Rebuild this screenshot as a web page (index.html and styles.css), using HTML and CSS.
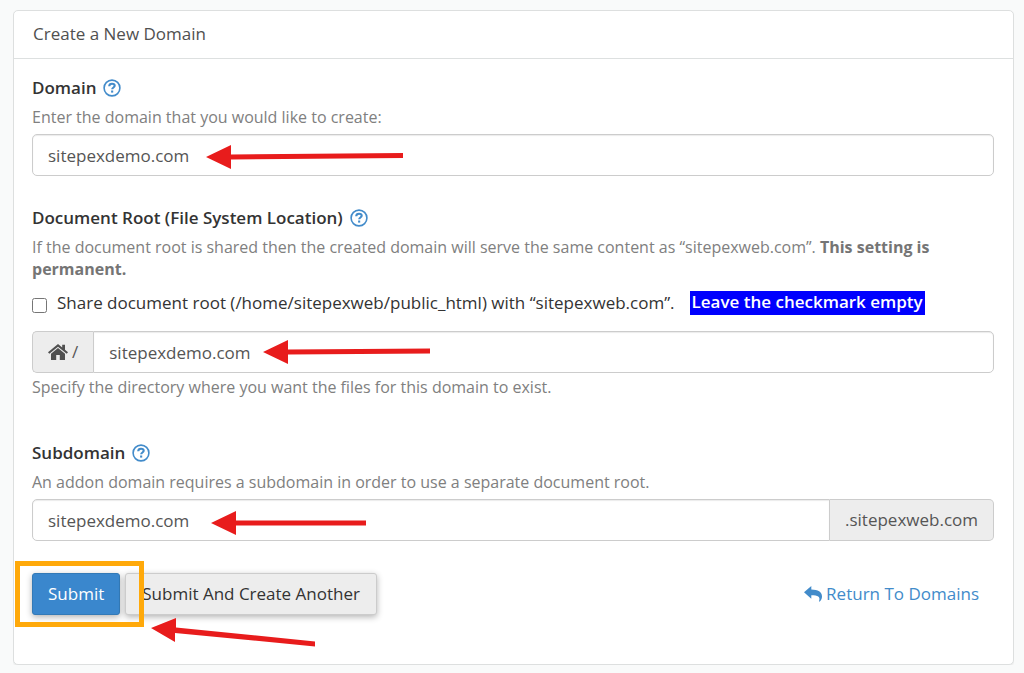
FILE: index.html
```
<!DOCTYPE html>
<html lang="en">
<head>
  <meta charset="UTF-8" />
  <meta name="viewport" content="width=device-width, initial-scale=1" />
  <title>Create a New Domain</title>
  <link rel="stylesheet" href="styles.css">
</head>
<body>

  <svg class="defs" width="0" height="0" aria-hidden="true">
    <symbol id="icon-help" viewBox="0 0 18 18">
      <circle cx="9" cy="9" r="7.9" fill="none" stroke="currentColor" stroke-width="1.6" />
      <path d="M6.2 7.2C6.300 5.500 7.500 4.700 9 4.700c1.600 0 2.700.8 2.700 2.100 0 1.700-2.500 1.700-2.500 3.500" fill="none" stroke="currentColor" stroke-width="2.1" />
      <rect x="8.1" y="11.5" width="2.1" height="2.1" fill="currentColor" />
    </symbol>
  </svg>

  <main class="panel">
    <h1 class="panel-title">Create a New Domain</h1>

    <form class="panel-body">
      <section class="field">
        <div class="field-label">
          <label for="domain">Domain</label>
          <a href="#" class="help" aria-label="Domain help"><svg><use href="#icon-help" /></svg></a>
        </div>
        <p class="hint">Enter the domain that you would like to create:</p>
        <div class="group">
          <input type="text" id="domain" value="sitepexdemo.com" />
          <svg class="arrow arrow-domain" viewBox="0 0 198 26" aria-hidden="true">
            <path d="M0 13 25 1V10.500L197 9V14L25 15.500V25Z" />
          </svg>
        </div>
      </section>

      <section class="field root">
        <div class="field-label">
          <label for="docroot">Document Root (File System Location)</label>
          <a href="#" class="help" aria-label="Document root help"><svg><use href="#icon-help" /></svg></a>
        </div>
        <p class="hint">If the document root is shared then the created domain will serve the same content as “sitepexweb.com”. <strong>This setting is permanent.</strong></p>
        <div class="share">
          <input type="checkbox" id="share" />
          <label for="share">Share document root (/home/sitepexweb/public_html) with “sitepexweb.com”.</label>
          <span class="note">Leave the checkmark empty</span>
        </div>
        <div class="group">
          <span class="addon addon-left">
            <svg class="home" viewBox="0 0 20 16" aria-hidden="true">
              <path d="M10 0 0 8.300 1.300 9.800 10 2.700 18.700 9.800 20 8.300 17 5.800V.8H14.200V3.500Z" />
              <path d="M10 4.100 3 9.800V16H8.200V11H11.800V16H17V9.800Z" />
            </svg>
            /
          </span>
          <input type="text" id="docroot" value="sitepexdemo.com" />
          <svg class="arrow arrow-root" viewBox="0 0 168 26" aria-hidden="true">
            <path d="M0 13 25 1V10.500L167 9.500V14.500L25 15.500V25Z" />
          </svg>
        </div>
        <p class="hint">Specify the directory where you want the files for this domain to exist.</p>
      </section>

      <section class="field">
        <div class="field-label">
          <label for="subdomain">Subdomain</label>
          <a href="#" class="help" aria-label="Subdomain help"><svg><use href="#icon-help" /></svg></a>
        </div>
        <p class="hint">An addon domain requires a subdomain in order to use a separate document root.</p>
        <div class="group">
          <input type="text" id="subdomain" value="sitepexdemo.com" />
          <span class="addon addon-right">.sitepexweb.com</span>
          <svg class="arrow arrow-sub" viewBox="0 0 156 26" aria-hidden="true">
            <path d="M0 13 25 1V10.500H155V15.500H25V25Z" />
          </svg>
        </div>
      </section>

      <div class="actions">
        <button type="submit" class="btn btn-primary">Submit</button>
        <button type="button" class="btn">Submit And Create Another</button>
        <a href="#" class="back">
          <svg viewBox="0 0 18 16" aria-hidden="true">
            <path d="M0 6.300 7.300 0V3.500C14 3.600 18 5.700 18 10.500c0 2-.8 3.900-2.200 5.100-.4.300-.9 0-.7-.6C16.500 10.600 14 9.300 7.300 9.200V12.700Z" />
          </svg>
          Return To Domains
        </a>
        <span class="highlight"></span>
        <svg class="arrow arrow-submit" viewBox="0 0 166 32" aria-hidden="true">
          <path d="M0 11 25 1V10.500L164 24.500V29.500L24 16V25Z" />
        </svg>
      </div>
    </form>
  </main>

</body>
</html>
```
FILE: styles.css
```
* { box-sizing: border-box; }

body {
  margin: 10px 10px 8px 13px;
  background: #f9fafa;
  color: #333;
  font-family: 'Open Sans', sans-serif;
  font-size: 17px;
  line-height: 26px;
}

.defs { position: absolute; }

.panel {
  background: #fff;
  border: 1px solid #dddfdf;
  border-radius: 5px;
  box-shadow: 0 1px 2px rgba(0,0,0,0.08);
}
.panel-title {
  margin: 0;
  padding: 10px 19px 11px;
  border-bottom: 1px solid #dde0e0;
  font-size: 17px;
  font-weight: 400;
  color: #505050;
}
.panel-body { padding: 16px 19px 49px 18px; }

.field { margin-bottom: 29px; }
.field.root { margin-bottom: 42px; }

.field-label {
  display: flex;
  align-items: center;
  gap: 7px;
  margin-bottom: 5px;
  font-weight: 600;
}
.help { display: flex; color: #428bca; }
.help svg { width: 18px; height: 18px; }

.hint {
  margin: 0 0 6px;
  font-size: 16px;
  line-height: 22px;
  color: #808080;
}
.hint strong { color: #757575; }
.group + .hint { margin: 3px 0 0; }

.group { position: relative; display: flex; }
.group input {
  flex: 1;
  min-width: 0;
  height: 42px;
  padding: 0 15px;
  border: 1px solid #ccc;
  border-radius: 5px;
  background: #fff;
  box-shadow: inset 0 1px 1px rgba(0,0,0,0.08);
  font: inherit;
  color: #555;
}
.addon {
  display: flex;
  align-items: center;
  gap: 4px;
  padding: 0 15px;
  border: 1px solid #ccc;
  background: #ededed;
  color: #555;
}
.addon-left { border-right: 0; border-radius: 5px 0 0 5px; }
.group .addon-left + input { border-radius: 0 5px 5px 0; }
.addon-right { border-left: 0; border-radius: 0 5px 5px 0; }
.group #subdomain { border-radius: 5px 0 0 5px; }
.home { width: 20px; height: 16px; fill: #505050; }

.share {
  display: flex;
  align-items: center;
  margin: 10px 0 15px;
}
.share input { width: 15px; height: 15px; margin: 4px 10px 0 0; }
.note {
  margin-left: 15px;
  padding: 0 2px 2px;
  background: #0000fe;
  color: #fff;
  font-weight: 600;
  line-height: 22px;
}

.actions {
  position: relative;
  display: flex;
  align-items: center;
  gap: 5px;
  margin-top: 32px;
}
.btn {
  height: 42px;
  padding: 0 16px;
  border: 1px solid #ccc;
  border-radius: 3px;
  background: #ededed;
  box-shadow: 0 2px 6px rgba(0,0,0,0.3);
  font: inherit;
  color: #333;
  cursor: pointer;
}
.btn-primary { padding: 0 15px; background: #3a87cd; border-color: #337ab7; color: #fff; }

.back {
  display: flex;
  align-items: center;
  gap: 4px;
  margin-left: auto;
  padding-right: 15px;
  color: #428bca;
  text-decoration: none;
}
.back svg { width: 18px; height: 16px; fill: #428bca; }

/* callouts drawn over the form */
.arrow { position: absolute; fill: #e81c1c; pointer-events: none; }
.arrow-domain { left: 174px; top: 10px; width: 198px; height: 26px; }
.arrow-root { left: 231px; top: 8px; width: 168px; height: 26px; }
.arrow-sub { left: 179px; top: 11px; width: 156px; height: 26px; }
.arrow-submit { left: 119px; top: 44px; width: 166px; height: 32px; }
.highlight {
  position: absolute;
  left: -17px;
  top: -12px;
  width: 129px;
  height: 66px;
  border: 5px solid #ffa90a;
  pointer-events: none;
}
```
